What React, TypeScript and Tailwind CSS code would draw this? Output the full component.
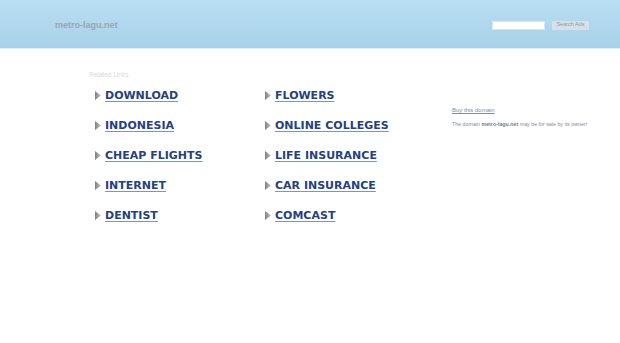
import React from "react";

const LINKS = [
  ["DOWNLOAD", "FLOWERS"],
  ["INDONESIA", "ONLINE COLLEGES"],
  ["CHEAP FLIGHTS", "LIFE INSURANCE"],
  ["INTERNET", "CAR INSURANCE"],
  ["DENTIST", "COMCAST"],
];

function Arrow() {
  return (
    <svg width="6" height="9" viewBox="0 0 6 9" className="shrink-0">
      <defs>
        <linearGradient id="ag" x1="0" y1="0" x2="1" y2="0">
          <stop offset="0" stopColor="#808080" />
          <stop offset="1" stopColor="#c4c4c4" />
        </linearGradient>
      </defs>
      <path d="M0 0 L6 4.5 L0 9 Z" fill="url(#ag)" />
    </svg>
  );
}

function LinkItem({ label }: { label: string }) {
  return (
    <div className="flex items-center gap-[4px] h-[30px]">
      <Arrow />
      <a
        href="#"
        className="text-[11px] font-bold text-[#25417f] underline underline-offset-2 decoration-[#7f93bb] leading-none"
        style={{ fontFamily: '"DejaVu Sans", Verdana, sans-serif' }}
      >
        {label}
      </a>
    </div>
  );
}

export default function App() {
  return (
    <div className="w-[620px] h-[343px] bg-white" style={{ fontFamily: '"Liberation Sans", Arial, sans-serif' }}>
      {/* Header */}
      <header className="h-[49px] bg-gradient-to-b from-[#b8dff3] to-[#a8d0e8] border-b border-[#dcf0fa] flex items-center justify-between pl-[55px] pr-[31px]">
        <span className="text-[9px] font-bold text-[#9aa6b6] mt-[3px]">metro-lagu.net</span>
        <div className="flex items-center gap-[7px] mt-[2px]">
          <input className="w-[53px] h-[9px] bg-white border border-[#d6e8f2] outline-none" />
          <button className="w-[37px] h-[9px] bg-[#d6e0e8] text-[5.5px] text-[#8c9aa8] leading-none flex items-center justify-center">
            Search Ads
          </button>
        </div>
      </header>

      <main className="flex">
        {/* Related links */}
        <section className="pl-[89px] pt-[23px] w-[452px]">
          <p className="text-[6.5px] text-[#d8d8d8] leading-none mb-[2px]">Related Links</p>
          <div className="grid grid-cols-[170px_170px] pl-[6px]">
            {LINKS.map(([a, b]) => (
              <React.Fragment key={a}>
                <LinkItem label={a} />
                <LinkItem label={b} />
              </React.Fragment>
            ))}
          </div>
        </section>

        {/* Right panel */}
        <aside className="pt-[58px] text-[#7d8ea3]">
          <a href="#" className="block text-[6px] underline leading-none">Buy this domain</a>
          <p className="mt-[9px] text-[5.3px] leading-none whitespace-nowrap">
            The domain <b className="text-[#6f8096]">metro-lagu.net</b> may be for sale by its owner!
          </p>
        </aside>
      </main>
    </div>
  );
}
